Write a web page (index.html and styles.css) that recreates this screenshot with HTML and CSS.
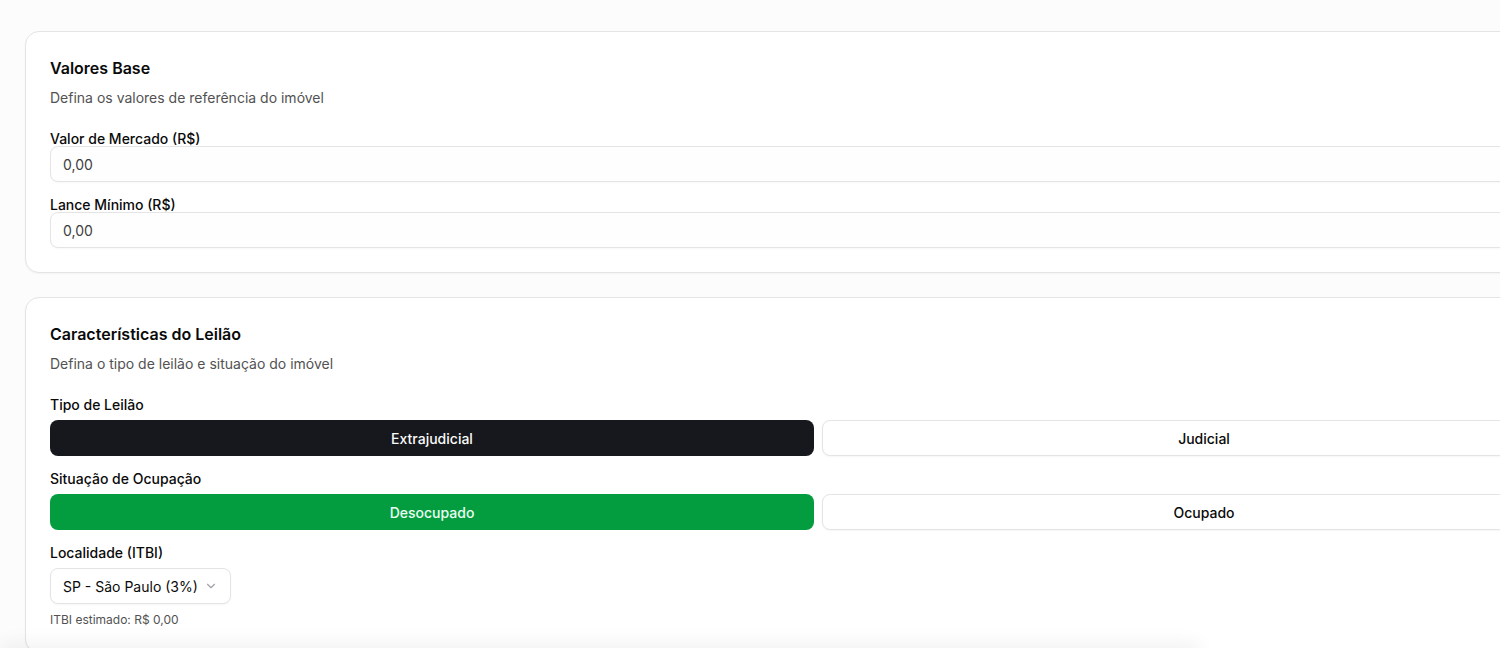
FILE: index.html
```html
<!DOCTYPE html>
<html lang="pt-BR">
<head>
<meta charset="utf-8">
<title>Simulador de Leilão</title>
<link rel="stylesheet" href="styles.css">
</head>
<body>
<main class="page">
  <section class="card">
    <h2 class="card-title">Valores Base</h2>
    <p class="card-desc">Defina os valores de referência do imóvel</p>
    <div class="fields">
      <div class="field tight">
        <label class="label">Valor de Mercado (R$)</label>
        <div class="input">0,00</div>
      </div>
      <div class="field tight">
        <label class="label">Lance Mínimo (R$)</label>
        <div class="input">0,00</div>
      </div>
    </div>
  </section>

  <section class="card">
    <h2 class="card-title">Características do Leilão</h2>
    <p class="card-desc">Defina o tipo de leilão e situação do imóvel</p>
    <div class="fields">
      <div class="field">
        <label class="label">Tipo de Leilão</label>
        <div class="toggle">
          <button class="btn btn-dark">Extrajudicial</button>
          <button class="btn btn-outline">Judicial</button>
        </div>
      </div>
      <div class="field">
        <label class="label">Situação de Ocupação</label>
        <div class="toggle">
          <button class="btn btn-green">Desocupado</button>
          <button class="btn btn-outline">Ocupado</button>
        </div>
      </div>
      <div class="field">
        <label class="label">Localidade (ITBI)</label>
        <div class="select">
          <span>SP - São Paulo (3%)</span>
          <svg class="chev" width="14" height="14" viewBox="0 0 24 24" fill="none" stroke="currentColor" stroke-width="2" stroke-linecap="round" stroke-linejoin="round"><path d="m6 9 6 6 6-6"/></svg>
        </div>
        <p class="hint">ITBI estimado: R$ 0,00</p>
      </div>
    </div>
  </section>
</main>
<div class="bottom-fade"></div>
</body>
</html>
```

FILE: styles.css
```css
* { box-sizing: border-box; }
html, body { margin: 0; padding: 0; }
body {
  background: #fcfcfc;
  font-family: Inter, "Noto Sans", "Liberation Sans", sans-serif;
  color: #0a0a0a;
  overflow: hidden;
  width: 1500px;
  height: 648px;
}
.page {
  padding: 31px 0 0 25px;
  display: flex;
  flex-direction: column;
  gap: 24px;
}
.card {
  width: 1586px;
  flex-shrink: 0;
  background: #ffffff;
  border: 1px solid #e4e4e7;
  border-radius: 14px;
  padding: 24px;
  box-shadow: 0 1px 2px rgba(0,0,0,0.04);
}
.card-title {
  margin: 0;
  font-size: 16px;
  line-height: 24px;
  font-weight: 600;
  color: #0a0a0a;
}
.card-desc {
  margin: 8px 0 0;
  font-size: 14px;
  line-height: 20px;
  color: #525252;
}
.fields {
  margin-top: 24px;
  display: flex;
  flex-direction: column;
  gap: 16px;
}
.field { display: flex; flex-direction: column; gap: 8px; }
.field.tight { gap: 0; }
.label {
  font-size: 14px;
  line-height: 14px;
  font-weight: 500;
  color: #0a0a0a;
}
.input {
  height: 36px;
  border: 1px solid #e4e4e7;
  border-radius: 8px;
  background: #fefefe;
  padding: 0 12px;
  display: flex;
  align-items: center;
  font-size: 14px;
  color: #404040;
  box-shadow: 0 1px 2px rgba(0,0,0,0.03);
}
.toggle {
  display: grid;
  grid-template-columns: 1fr 1fr;
  gap: 8px;
}
.btn {
  height: 36px;
  border-radius: 8px;
  font-family: inherit;
  font-size: 14px;
  font-weight: 500;
  border: 1px solid transparent;
  padding: 0 16px;
}
.btn-dark { background: #16181d; color: #fafafa; }
.btn-green { background: #039d3f; color: #ecfdf3; }
.btn-outline {
  background: #ffffff;
  color: #0a0a0a;
  border-color: #e4e4e7;
  box-shadow: 0 1px 2px rgba(0,0,0,0.04);
}
.select {
  width: 181px;
  height: 36px;
  border: 1px solid #e4e4e7;
  border-radius: 8px;
  background: #ffffff;
  padding: 0 12px;
  display: flex;
  align-items: center;
  justify-content: space-between;
  font-size: 14px;
  color: #0a0a0a;
  box-shadow: 0 1px 2px rgba(0,0,0,0.04);
}
.chev { color: #a1a1aa; }
.hint {
  margin: 0;
  font-size: 12px;
  line-height: 16px;
  color: #525252;
}
.bottom-fade {
  position: fixed;
  left: 0;
  right: 300px;
  bottom: -40px;
  height: 40px;
  box-shadow: 0 -6px 18px rgba(0,0,0,0.05);
  pointer-events: none;
}
```
